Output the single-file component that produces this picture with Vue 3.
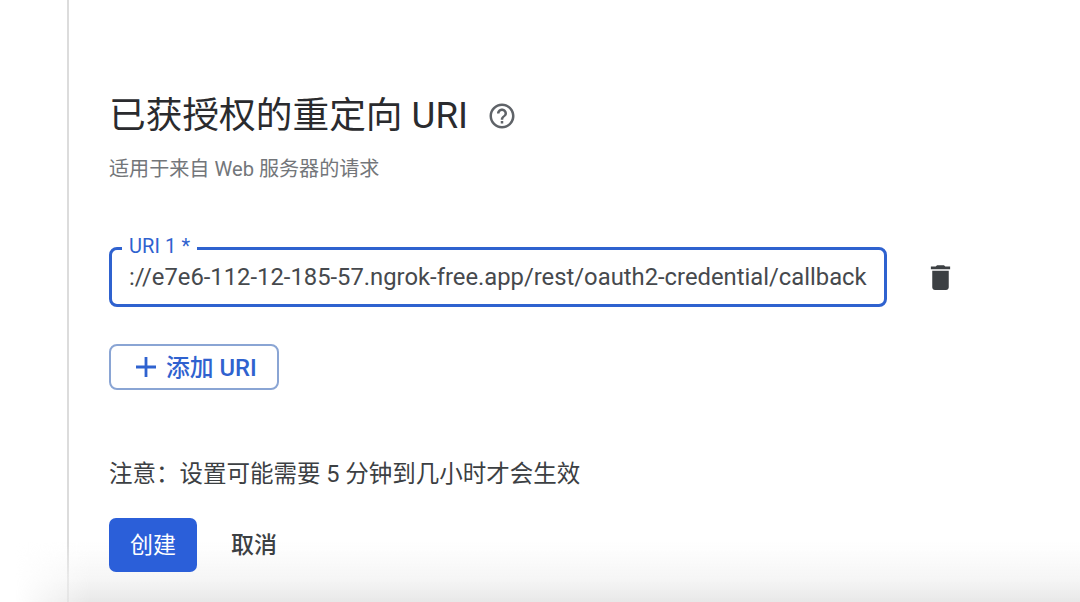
<script setup>
const uri = '://e7e6-112-12-185-57.ngrok-free.app/rest/oauth2-credential/callback'
</script>

<template>
  <div class="page">
    <div class="gutter"></div>
    <main class="content">
      <div class="title-row">
        <h1 class="title">已获授权的重定向 URI</h1>
        <svg class="help" viewBox="0 0 24 24" aria-hidden="true">
          <path fill="#5f6368" d="M11 18h2v-2h-2v2zm1-16C6.48 2 2 6.48 2 12s4.48 10 10 10 10-4.48 10-10S17.52 2 12 2zm0 18c-4.41 0-8-3.59-8-8s3.59-8 8-8 8 3.59 8 8-3.59 8-8 8zm0-14c-2.21 0-4 1.79-4 4h2c0-1.1.9-2 2-2s2 .9 2 2c0 2-3 1.75-3 5h2c0-2.25 3-2.5 3-5 0-2.21-1.79-4-4-4z"/>
        </svg>
      </div>
      <p class="subtitle">适用于来自 Web 服务器的请求</p>

      <div class="uri-row">
        <div class="field">
          <span class="field-label">URI 1 *</span>
          <span class="field-value">{{ uri }}</span>
        </div>
        <svg class="trash" viewBox="0 0 24 24" aria-hidden="true">
          <path fill="#3c4043" d="M6 19c0 1.1.9 2 2 2h8c1.1 0 2-.9 2-2V7H6v12zM19 4h-3.5l-1-1h-5l-1 1H5v2h14V4z"/>
        </svg>
      </div>

      <button class="add-btn" type="button">
        <svg class="plus" viewBox="0 0 24 24" aria-hidden="true">
          <path fill="#2f62cf" d="M22 13.4h-8.6V22h-2.8v-8.6H2v-2.8h8.6V2h2.8v8.6H22z"/>
        </svg>
        <span class="add-text">添加 URI</span>
      </button>

      <p class="note">注意：设置可能需要 5 分钟到几小时才会生效</p>

      <div class="actions">
        <button class="primary" type="button">创建</button>
        <button class="cancel" type="button">取消</button>
      </div>
    </main>
    <div class="fade"></div>
  </div>
</template>

<style scoped>
.page {
  position: relative;
  display: flex;
  width: 1080px;
  height: 602px;
  overflow: hidden;
  background: #fff;
  font-family: Roboto, "Noto Sans CJK SC", sans-serif;
}
.gutter {
  width: 67px;
  flex: none;
  border-right: 2px solid #dcdcdc;
}
.content {
  position: relative;
  z-index: 1;
  flex: 1;
  min-width: 0;
  padding: 92px 0 0 40px;
}
.title-row {
  display: flex;
  align-items: center;
  height: 48px;
}
.title {
  margin: 0;
  font-size: 36.7px;
  line-height: 48px;
  font-weight: 400;
  color: #2a2b2e;
  white-space: nowrap;
}
.help {
  width: 30px;
  height: 30px;
  margin-left: 19px;
}
.subtitle {
  margin: 16px 0 0;
  font-size: 20.1px;
  line-height: 26px;
  color: #73767a;
}
.uri-row {
  display: flex;
  align-items: center;
  margin-top: 65px;
}
.field {
  position: relative;
  box-sizing: border-box;
  width: 778px;
  height: 60px;
  flex: none;
  display: flex;
  align-items: center;
  padding: 0 17px;
  border: 3px solid #2f62cf;
  border-radius: 8px;
}
.field-label {
  position: absolute;
  left: 10px;
  top: -16px;
  padding: 0 7px;
  background: #fff;
  font-size: 20px;
  letter-spacing: 0.1px;
  line-height: 24px;
  color: #2f62cf;
}
.field-value {
  font-size: 23.8px;
  color: #46494d;
  white-space: nowrap;
}
.trash {
  width: 33px;
  height: 33px;
  margin-left: 37px;
}
.add-btn {
  display: flex;
  align-items: center;
  box-sizing: border-box;
  width: 170px;
  height: 46px;
  margin-top: 37px;
  padding: 0 0 0 22px;
  border: 2px solid #8aa5d4;
  border-radius: 8px;
  background: #fff;
  font: inherit;
  font-size: 23.8px;
  font-weight: 500;
  color: #2f62cf;
}
.add-text {
  padding-bottom: 3px;
}
.plus {
  width: 24px;
  height: 24px;
  margin: 0 8px 0 1px;
}
.note {
  margin: 68px 0 0;
  font-size: 23.5px;
  line-height: 32px;
  color: #3c4043;
}
.actions {
  display: flex;
  align-items: center;
  margin-top: 28px;
}
.primary {
  width: 88px;
  height: 54px;
  padding: 0 0 4px;
  border: 0;
  border-radius: 7px;
  background: #2b5fd9;
  color: #fff;
  font: inherit;
  font-size: 23px;
}
.cancel {
  margin-left: 34px;
  padding: 0 0 4px;
  border: 0;
  background: none;
  font: inherit;
  font-size: 23px;
  font-weight: 500;
  color: #3c4043;
}
.fade {
  position: absolute;
  left: 0;
  right: 0;
  bottom: 0;
  height: 60px;
  background: linear-gradient(to bottom, rgba(240, 240, 240, 0), rgba(244, 244, 244, 0.8) 60%, rgba(232, 232, 232, 1));
  -webkit-mask-image: linear-gradient(to right, transparent 15px, #000 90px);
  mask-image: linear-gradient(to right, transparent 15px, #000 90px);
  pointer-events: none;
}
</style>
